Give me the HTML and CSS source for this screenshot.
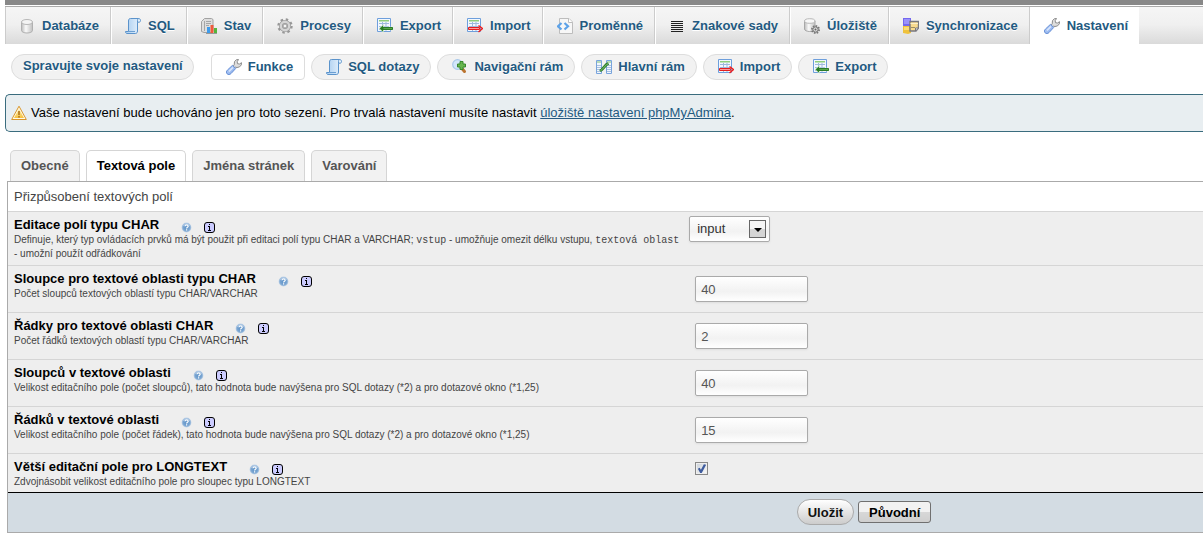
FILE: index.html
```html
<!DOCTYPE html>
<html lang="cs">
<head>
<meta charset="utf-8">
<title>phpMyAdmin – Nastavení</title>
<link rel="stylesheet" href="styles.css">
</head>
<body>
<svg class="sprite" aria-hidden="true">
  <defs>
    <linearGradient id="g-metal"><stop offset="0" stop-color="#bcbcbc"/><stop offset=".4" stop-color="#fafafa"/><stop offset="1" stop-color="#c0c0c0"/></linearGradient>
    <linearGradient id="g-paper" x2="1"><stop offset="0" stop-color="#a9cdf0"/><stop offset="1" stop-color="#eaf4fd"/></linearGradient>
    <linearGradient id="g-gold" x2="0" y2="1"><stop offset="0" stop-color="#fff3b8"/><stop offset="1" stop-color="#f6c13d"/></linearGradient>
    <linearGradient id="g-handle" x2="1" y2="1"><stop offset="0" stop-color="#c3d8fb"/><stop offset="1" stop-color="#7ea5e8"/></linearGradient>
    <radialGradient id="g-help"><stop offset="0" stop-color="#5d92c8"/><stop offset=".7" stop-color="#7ba6d2"/><stop offset="1" stop-color="#c3d5e8"/></radialGradient>
  </defs>
  <symbol id="i-db" viewBox="0 0 16 16">
    <path d="M2.500 4v8.500c0 1.400 2.500 2.500 5.500 2.500s5.500-1.100 5.500-2.500V4z" fill="url(#g-metal)" stroke="#b0b0b0"/>
    <ellipse cx="8" cy="4" rx="5.500" ry="2.500" fill="#f4f4f4" stroke="#b8b8b8"/>
  </symbol>
  <symbol id="i-sql" viewBox="0 0 16 16">
    <path d="M3.500 3C3.500 1.300 4.200.5 5.500.5h8c1.300 0 2 .8 2 2s-.7 1.700-1.500 1.700h-1.500V13c0 1.500-.8 2.500-2 2.500H2C.9 15.500.5 14.700.5 13.500h3z" fill="url(#g-paper)" stroke="#5b93cb"/>
    <path d="M12.500 4.200V2.300c0-1 .5-1.700 1.200-1.700" fill="none" stroke="#5b93cb"/>
    <path d="M3 13.500h7" fill="none" stroke="#6c9fd2"/>
  </symbol>
  <symbol id="i-stat" viewBox="0 0 16 16">
    <path d="M.5 3.500l3-3h7l1.500 1v12l-2 1h-7l-2.500-1z" fill="#dedede" stroke="#a2a2a2"/>
    <path d="M5 3.500h5M5 5.500h5M5 7.500h3M3.500 3v10" stroke="#a6a6a6" fill="none"/>
    <path d="M6 9h3v6H6z" fill="#3f9bea"/><path d="M9.500 7h3v8h-3z" fill="#ef5a3c"/><path d="M13 10h3v5h-3z" fill="#54b53c"/>
    <path d="M5 15.500h11" stroke="#999"/>
  </symbol>
  <symbol id="i-gear" viewBox="0 0 16 16">
    <circle cx="8" cy="8" r="6.500" fill="none" stroke="#979797" stroke-width="2.400" stroke-dasharray="2.400 2.700"/>
    <circle cx="8" cy="8" r="4.200" fill="none" stroke="#979797" stroke-width="3.800"/>
    <circle cx="8" cy="8" r="4.200" fill="none" stroke="#d4d4d4" stroke-width="2.400"/>
    <circle cx="8" cy="8" r="2" fill="#f4f4f4" stroke="#999"/>
  </symbol>
  <symbol id="i-table" viewBox="0 0 16 16">
    <path d="M.5.500h13v13H.5z" fill="#f3f8fe" stroke="#6e9fdc"/>
    <path d="M2 2h10v1.500H2z" fill="#8fcf7c"/>
    <path d="M2 5.500h10M2 8.500h10M2 11.500h10M5.500 4v9M9 4v9" stroke="#9db9dd" fill="none"/>
  </symbol>
  <symbol id="i-export" viewBox="0 0 16 16">
    <use href="#i-table"/>
    <path d="M2 10.500L6.500 6.500v2.500H16v3H6.500v2.500z" fill="#58a84b" stroke="#f5faf5" stroke-width=".5"/>
    <path d="M3 10.500l3-2.800v5.600z" fill="#267a22"/><path d="M6 9.500h9.500v2H6z" fill="none" stroke="#2b7c27"/>
  </symbol>
  <symbol id="i-import" viewBox="0 0 16 16">
    <use href="#i-table"/>
    <path d="M1.500 9.500h11v2h-11z" fill="#ff9b9b" stroke="#e41f1f"/>
    <path d="M11.500 7.500l4 3-4 3.500" fill="none" stroke="#ee1c1c" stroke-width="1.400"/>
  </symbol>
  <symbol id="i-vars" viewBox="0 0 16 16">
    <path d="M2.500.500H12l3.500 3.500v11.500h-13z" fill="#f7f7f7" stroke="#bdbdbd"/><path d="M11.500.500v4h4" fill="#fff" stroke="#bdbdbd"/>
    <path d="M4.500 5L1 8.300l3.500 3.200M7.500 5L11 8.300l-3.500 3.200" fill="none" stroke="#5da2e8" stroke-width="2.200"/>
  </symbol>
  <symbol id="i-lines" viewBox="0 0 16 16"><path d="M2 3.500h12M2 5.500h12M2 7.500h12M2 9.500h12M2 11.500h12M2 13.500h12" stroke="#222"/></symbol>
  <symbol id="i-engine" viewBox="0 0 16 16">
    <path d="M.5 3v8c0 1.400 2.300 2.500 5.200 2.500S11 12.400 11 11V3z" fill="url(#g-metal)" stroke="#a8a8a8"/><ellipse cx="5.750" cy="3" rx="5.200" ry="2.300" fill="#f8f8f8" stroke="#b8b8b8"/>
    <circle cx="11.500" cy="11.500" r="3.500" fill="#d2d2d2" stroke="#777" stroke-width="2" stroke-dasharray="1.500 1.200"/><circle cx="11.500" cy="11.500" r="2.600" fill="#ddd" stroke="#777"/><circle cx="11.500" cy="11.500" r="1" fill="#666"/>
  </symbol>
  <symbol id="i-sync" viewBox="0 0 16 16">
    <path d="M0 0h8v8H0z" fill="#7468ef"/><path d="M1 1h6v5H1z" fill="#9a92fa"/><path d="M0 8h8v7l-3 1-5-1z" fill="#efc23c"/><path d="M1 9h5v3H1z" fill="#fadd76"/>
    <path d="M7 3.500h8.500v6.500l-2.500 3H7z" fill="#f8da8e" stroke="#77777f" stroke-width="1.400"/><path d="M7.500 5.500h7.500" stroke="#fdf0c8"/><path d="M8 9.500h4" stroke="#a08f62"/><path d="M12.500 13v-3h3z" fill="#fff" stroke="#77777f"/>
  </symbol>
  <symbol id="i-wrench" viewBox="0 0 16 16">
    <path d="M8.500 2.500L10.500.7l2-.2-1.300 2.200.3 2 2 .3 2-1.300-.2 2.200-1.800 2-2.500.6-1.500-.3L8 9.500 6.500 8l1.700-2.200z" fill="#dedede" stroke="#8c8c8c"/>
    <path d="M6.500 6.300l3.200 3.200-4.700 5.100c-1.100 1.100-2.800 1.300-3.800.3s-1-2.700.2-3.800z" fill="url(#g-handle)" stroke="#668fd6"/>
    <path d="M3 12.500l4-4" stroke="#dbe8fd" stroke-width="1.500"/>
  </symbol>
  <symbol id="i-nav" viewBox="0 0 16 16">
    <path d="M9.500 9l3 3.500" stroke="#bb7430" stroke-width="3" stroke-linecap="round"/>
    <circle cx="5.500" cy="5.500" r="4.800" fill="#d3e6fa" stroke="#a9c8ea" stroke-width="1.200"/>
    <path d="M8 2.500h3V5h2.500v3H11v2.500H8V8H5.500V5H8z" fill="#67b54e" stroke="#38882d"/>
  </symbol>
  <symbol id="i-main" viewBox="0 0 16 16">
    <path d="M.5 1.500h5v13h-5zM10.500 1.500h5v13h-5z" fill="#f0f6fe" stroke="#78a4dc"/>
    <path d="M1 3h4M11 3h4" stroke="#7fc070"/><path d="M1 6.500h4M1 8.500h4M1 10.500h4M1 12.500h4M11 6.500h4M11 8.500h4M11 10.500h4M11 12.500h4" stroke="#a9c0df"/>
    <path d="M4 12l2-1.500 4.500-5 2-1" fill="none" stroke="#2f7f2a" stroke-width="2.800"/><path d="M4.500 11.600l1.500-1 4.500-5 1.500-.8" fill="none" stroke="#7dc270"/>
  </symbol>
  <symbol id="i-warn" viewBox="0 0 16 16">
    <path d="M8 1.200l7.300 13.300H.7z" fill="#fffbe8" stroke="#d9962c" stroke-linejoin="round"/><path d="M8 3.700l5 9.300H3z" fill="url(#g-gold)"/>
    <path d="M8 6v4" stroke="#b87f25" stroke-width="1.800"/><circle cx="8" cy="11.700" r="1" fill="#b87f25"/>
  </symbol>
  <symbol id="i-help" viewBox="0 0 11 11">
    <circle cx="5.500" cy="5.500" r="4.900" fill="url(#g-help)"/><path d="M2.200 3.500a4 4 0 0 1 6.600 0" fill="none" stroke="#b9d0ea"/>
    <path d="M4 4.300c0-1.900 3.200-1.800 3.200 0 0 1-1.600 1.100-1.600 2.200M5.600 7.300v1.300" fill="none" stroke="#fff" stroke-width="1.200"/>
  </symbol>
  <symbol id="i-info" viewBox="0 0 11 11">
    <rect x=".5" y=".5" width="10" height="10" rx="2.500" fill="#ccf" stroke="#000"/><path d="M5 2h1v1H5zM4 4h2v4h1v1H4V8h1V5H4z" fill="#000"/>
  </symbol>
</svg>

<nav class="menu">
  <a href="#"><svg><use href="#i-db"/></svg>Databáze</a>
  <a href="#"><svg><use href="#i-sql"/></svg>SQL</a>
  <a href="#"><svg><use href="#i-stat"/></svg>Stav</a>
  <a href="#"><svg><use href="#i-gear"/></svg>Procesy</a>
  <a href="#"><svg><use href="#i-export"/></svg>Export</a>
  <a href="#"><svg><use href="#i-import"/></svg>Import</a>
  <a href="#"><svg><use href="#i-vars"/></svg>Proměnné</a>
  <a href="#"><svg><use href="#i-lines"/></svg>Znakové sady</a>
  <a href="#"><svg><use href="#i-engine"/></svg>Úložiště</a>
  <a href="#"><svg><use href="#i-sync"/></svg>Synchronizace</a>
  <a href="#" class="active"><svg><use href="#i-wrench"/></svg>Nastavení</a>
</nav>

<nav class="submenu">
  <a href="#" class="manage">Spravujte svoje nastavení</a>
  <a href="#" class="active"><svg><use href="#i-wrench"/></svg>Funkce</a>
  <a href="#"><svg><use href="#i-sql"/></svg>SQL dotazy</a>
  <a href="#"><svg><use href="#i-nav"/></svg>Navigační rám</a>
  <a href="#"><svg><use href="#i-main"/></svg>Hlavní rám</a>
  <a href="#"><svg><use href="#i-import"/></svg>Import</a>
  <a href="#"><svg><use href="#i-export"/></svg>Export</a>
</nav>

<div class="notice">
  <svg><use href="#i-warn"/></svg>
  <p>Vaše nastavení bude uchováno jen pro toto sezení. Pro trvalá nastavení musíte nastavit <a href="#">úložiště nastavení phpMyAdmina</a>.</p>
</div>

<nav class="tabs">
  <a href="#">Obecné</a>
  <a href="#" class="active">Textová pole</a>
  <a href="#">Jména stránek</a>
  <a href="#">Varování</a>
</nav>

<form class="panel">
  <p class="intro">Přizpůsobení textových polí</p>
  <table class="options">
    <tr>
      <th><div class="title"><label for="char-edit">Editace polí typu CHAR</label><svg><use href="#i-help"/></svg><svg><use href="#i-info"/></svg></div>
        <small>Definuje, který typ ovládacích prvků má být použit při editaci polí typu CHAR a VARCHAR; <code>vstup</code> - umožňuje omezit délku vstupu, <code>textová oblast</code> - umožní použít odřádkování</small></th>
      <td class="choice"><span class="picker"><select id="char-edit"><option>input</option><option>textarea</option></select><span class="arrow"></span></span></td>
    </tr>
    <tr>
      <th><div class="title"><label for="char-cols">Sloupce pro textové oblasti typu CHAR</label><svg><use href="#i-help"/></svg><svg><use href="#i-info"/></svg></div>
        <small>Počet sloupců textových oblastí typu CHAR/VARCHAR</small></th>
      <td><input type="text" id="char-cols" value="40"></td>
    </tr>
    <tr>
      <th><div class="title"><label for="char-rows">Řádky pro textové oblasti CHAR</label><svg><use href="#i-help"/></svg><svg><use href="#i-info"/></svg></div>
        <small>Počet řádků textových oblastí typu CHAR/VARCHAR</small></th>
      <td><input type="text" id="char-rows" value="2"></td>
    </tr>
    <tr>
      <th><div class="title"><label for="text-cols">Sloupců v textové oblasti</label><svg><use href="#i-help"/></svg><svg><use href="#i-info"/></svg></div>
        <small>Velikost editačního pole (počet sloupců), tato hodnota bude navýšena pro SQL dotazy (*2) a pro dotazové okno (*1,25)</small></th>
      <td><input type="text" id="text-cols" value="40"></td>
    </tr>
    <tr>
      <th><div class="title"><label for="text-rows">Řádků v textové oblasti</label><svg><use href="#i-help"/></svg><svg><use href="#i-info"/></svg></div>
        <small>Velikost editačního pole (počet řádek), tato hodnota bude navýšena pro SQL dotazy (*2) a pro dotazové okno (*1,25)</small></th>
      <td><input type="text" id="text-rows" value="15"></td>
    </tr>
    <tr>
      <th><div class="title"><label for="longtext">Větší editační pole pro LONGTEXT</label><svg><use href="#i-help"/></svg><svg><use href="#i-info"/></svg></div>
        <small>Zdvojnásobit velikost editačního pole pro sloupec typu LONGTEXT</small></th>
      <td class="tick"><input type="checkbox" id="longtext" checked></td>
    </tr>
  </table>
  <div class="actions">
    <button type="submit" class="save">Uložit</button>
    <button type="reset" class="reset">Původní</button>
  </div>
</form>
</body>
</html>
```
FILE: styles.css
```css
* { box-sizing: border-box; }
body {
  margin: 0 0 0 5px;
  background: #fff;
  color: #444;
  font: 13px/16px "Liberation Sans", Arial, sans-serif;
}
p { margin: 0; }
a { color: #235a81; text-decoration: none; }
svg { width: 16px; height: 16px; flex: none; }
.sprite { position: absolute; width: 0; height: 0; }

.menu {
  display: flex;
  border-top: 5px solid #888;
  background: linear-gradient(#fff 1px, #aaa 1px, #aaa 2px, #f5f5f5 2px, #f0f0f0 50%, #dadada);
}
.menu a {
  display: flex;
  align-items: center;
  gap: 7px;
  height: 37px;
  margin-top: 2px;
  padding: 0 11px 0 13px;
  border-left: 1px solid #fff;
  border-right: 1px solid #ccc;
  font-weight: bold;
  text-shadow: 0 1px 0 #fff;
  white-space: nowrap;
}
.menu a:first-child { border-left-color: #ccc; }
.menu .active { background: #fff; border-right: 0; }

.submenu { display: flex; gap: 6px; margin: 10px 0 0 6px; }
.submenu a {
  display: flex;
  align-items: center;
  gap: 6px;
  height: 26px;
  padding: 0 11px 0 14px;
  border: 1px solid #ddd;
  border-radius: 13px;
  background: #f2f2f2;
  font-weight: bold;
  text-shadow: 0 1px 0 #fff;
  white-space: nowrap;
}
.submenu .manage { margin-right: 11px; padding: 0 10px 2px 11px; }
.submenu .active { background: #fff; border-radius: 4px; }

.notice {
  display: flex;
  align-items: center;
  gap: 4px;
  height: 38px;
  margin-top: 14px;
  padding-left: 5px;
  border: 1px solid #3a6c7e;
  border-right: 0;
  border-radius: 5px 0 0 5px;
  background: #e8eef1;
  color: #000;
}
.notice a { text-decoration: underline; }

.tabs { display: flex; gap: 6px; margin: 18px 0 0 5px; }
.tabs a {
  height: 31px;
  padding: 7px 10px;
  border: 1px solid #d5d5d5;
  border-bottom: 0;
  border-radius: 5px 5px 0 0;
  background: #f2f2f2;
  color: #555;
  font-weight: bold;
  white-space: nowrap;
}
.tabs .active { background: #fff; color: #000; }

.panel {
  margin-left: 2px;
  border: 1px solid #aaa;
  border-right: 0;
}
.intro { padding: 7px 6px 6px; }
.options { width: 100%; border-collapse: collapse; background: #eee; }
.options tr { border-top: 1px solid #d5d5d5; }
.options th {
  width: 57%;
  padding: 5px 5px 4px 6px;
  text-align: left;
  vertical-align: top;
  font-weight: normal;
}
.title { display: flex; align-items: flex-end; color: #000; font-weight: bold; }
.title svg { width: 11px; height: 11px; margin-left: 12px; }
.title label { margin-right: 10px; }
.options small { display: block; font-size: 10px; line-height: 14px; color: #444; }
.options code { font: 10px "Liberation Mono", monospace; }
.options td { height: 47px; padding: 0 0 0 6px; vertical-align: middle; }
.options .choice { padding: 4px 0 0; vertical-align: top; }
.options .tick { height: 38px; padding-bottom: 8px; }
.options tr:last-child th { padding-bottom: 2px; }

input[type="text"], select {
  border: 1px solid #aaa;
  border-radius: 2px;
  background: linear-gradient(#fff, #f2f2f2 60%, #fff);
  box-shadow: 0 1px 2px #ddd;
  color: #555;
  font: inherit;
}
input[type="text"] { display: block; width: 113px; height: 26px; padding: 0 5px; }
.picker { position: relative; display: inline-block; }
select { display: block; appearance: none; width: 81px; height: 26px; padding: 0 7px; color: #333; }
.arrow {
  position: absolute;
  top: 4px;
  right: 4px;
  width: 17px;
  height: 18px;
  border: 1px solid #666;
  background: linear-gradient(#f4f4f4 50%, #d5d5d5 50%);
  pointer-events: none;
}
.arrow::after {
  content: "";
  position: absolute;
  top: 7px;
  left: 4px;
  border: 4px solid transparent;
  border-top-color: #000;
  border-bottom: 0;
}
input[type="checkbox"] {
  display: block;
  appearance: none;
  width: 13px;
  height: 13px;
  margin: 0;
  padding: 1px;
  border: 1px solid #888;
  background: linear-gradient(135deg, #cfd5dc, #f6f6f6) content-box #fff;
}
input[type="checkbox"]:checked::before {
  content: "";
  display: block;
  width: 9px;
  height: 9px;
  background: #3f5c9e;
  clip-path: polygon(8% 50%, 28% 38%, 42% 62%, 75% 0, 100% 6%, 50% 100%, 35% 100%);
}

.actions {
  display: flex;
  align-items: center;
  gap: 4px;
  height: 40px;
  padding-left: 66%;
  border-top: 1px solid #000;
  background: #d3dce3;
}
.actions button {
  border: 1px solid #aaa;
  background: linear-gradient(#fff, #ccc);
  color: #111;
  font: bold 13px "Liberation Sans", Arial, sans-serif;
  white-space: nowrap;
}
.actions .save { height: 26px; padding: 0 10px; border-radius: 13px; }
.actions .reset {
  height: 22px;
  padding: 0 10px;
  border-color: #707070;
  border-radius: 3px;
  background: linear-gradient(#f2f2f2 50%, #d8d8d8 50%, #cfcfcf);
  color: #000;
}
```
